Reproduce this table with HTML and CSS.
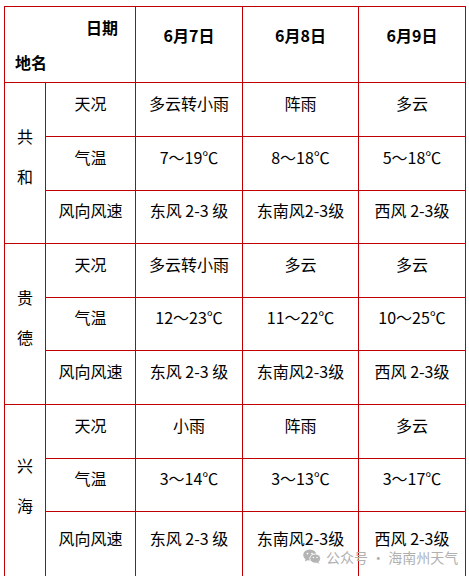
FILE: index.html
```html
<!DOCTYPE html>
<html lang="zh">
<head>
<meta charset="utf-8">
<link rel="stylesheet" href="styles.css">
</head>
<body>
<div class="page">
<table class="wx">
  <colgroup>
    <col class="c-region"><col class="c-item"><col class="c-d1"><col class="c-d2"><col class="c-d3">
  </colgroup>
  <tr class="r-head">
    <td colspan="2" class="corner"><div class="corner-date">日期</div><div class="corner-place">地名</div></td>
    <td class="day">6月7日</td>
    <td class="day">6月8日</td>
    <td class="day">6月9日</td>
  </tr>
  <tr class="r54">
    <td rowspan="3" class="region">共<br>和</td>
    <td>天况</td><td>多云转小雨</td><td>阵雨</td><td>多云</td>
  </tr>
  <tr class="r54">
    <td>气温</td><td>7～19℃</td><td>8～18℃</td><td>5～18℃</td>
  </tr>
  <tr class="r53">
    <td>风向风速</td><td>东风 2-3 级</td><td>东南风2-3级</td><td>西风 2-3级</td>
  </tr>
  <tr class="r54">
    <td rowspan="3" class="region">贵<br>德</td>
    <td>天况</td><td>多云转小雨</td><td>多云</td><td>多云</td>
  </tr>
  <tr class="r53">
    <td>气温</td><td>12～23℃</td><td>11～22℃</td><td>10～25℃</td>
  </tr>
  <tr class="r54">
    <td>风向风速</td><td>东风 2-3 级</td><td>东南风2-3级</td><td>西风 2-3级</td>
  </tr>
  <tr class="r54">
    <td rowspan="3" class="region">兴<br>海</td>
    <td>天况</td><td>小雨</td><td>阵雨</td><td>多云</td>
  </tr>
  <tr class="r53">
    <td>气温</td><td>3～14℃</td><td>3～13℃</td><td>3～17℃</td>
  </tr>
  <tr class="r-last">
    <td>风向风速</td><td>东风 2-3 级</td><td>东南风2-3级</td><td>西风 2-3级</td>
  </tr>
</table>
<div class="watermark">
  <svg class="wm-icon" width="18" height="15" viewBox="0 0 18 15">
    <ellipse cx="6.8" cy="6" rx="6.6" ry="5.6" fill="#b4b4b4"/>
    <path d="M2.6 9.6 L2 12.6 L5.2 10.8 Z" fill="#b4b4b4"/>
    <circle cx="4.5" cy="4.6" r="0.9" fill="#fff"/>
    <circle cx="9" cy="4.6" r="0.9" fill="#fff"/>
    <ellipse cx="12.2" cy="9.6" rx="5.4" ry="4.6" fill="#b4b4b4" stroke="#fff" stroke-width="0.9"/>
    <path d="M15.2 12.6 L16.2 14.8 L13.4 13.4 Z" fill="#b4b4b4"/>
    <circle cx="10.4" cy="8.6" r="0.75" fill="#fff"/>
    <circle cx="14" cy="8.6" r="0.75" fill="#fff"/>
  </svg>
  <span class="wm-text">公众号 · 海南州天气</span>
</div>
</div>
</body>
</html>
```

FILE: styles.css
```css
html, body {
  margin: 0;
  padding: 0;
  background: #ffffff;
}
.page {
  position: relative;
  width: 469px;
  height: 576px;
  overflow: hidden;
  padding: 6px 0 0 4px;
  box-sizing: border-box;
}
.wx {
  border-collapse: collapse;
  table-layout: fixed;
  width: 461px;
  font-family: "Noto Sans CJK SC", "Noto Sans", sans-serif;
  font-size: 16px;
  color: #000;
}
.c-region { width: 41px; }
.c-item { width: 90px; }
.c-d1 { width: 107px; }
.c-d2 { width: 116px; }
.c-d3 { width: 107px; }
.wx td {
  box-sizing: border-box;
  border: 1px solid #c00000;
  text-align: center;
  vertical-align: middle;
  padding: 0 0 14px 0;
  line-height: 20px;
  white-space: nowrap;
}
.r-head td { height: 76px; }
.r54 td { height: 54px; }
.r53 td { height: 53px; }
.r-last td { height: 67px; }
.wx td.corner {
  padding: 0;
  font-weight: bold;
  line-height: 35px;
}
.corner-date {
  text-align: right;
  padding-right: 17px;
}
.corner-place {
  text-align: left;
  padding-left: 10px;
}
.wx td.day {
  font-weight: bold;
  padding-bottom: 20px;
}
.wx td.region {
  line-height: 40px;
}
.watermark {
  position: absolute;
  left: 303px;
  top: 549px;
  display: flex;
  align-items: center;
  gap: 5px;
  font-family: "Noto Sans CJK SC", "Noto Sans", sans-serif;
  font-size: 14px;
  color: #b0b0b0;
  line-height: 14px;
}
.wm-icon {
  display: block;
}
```
